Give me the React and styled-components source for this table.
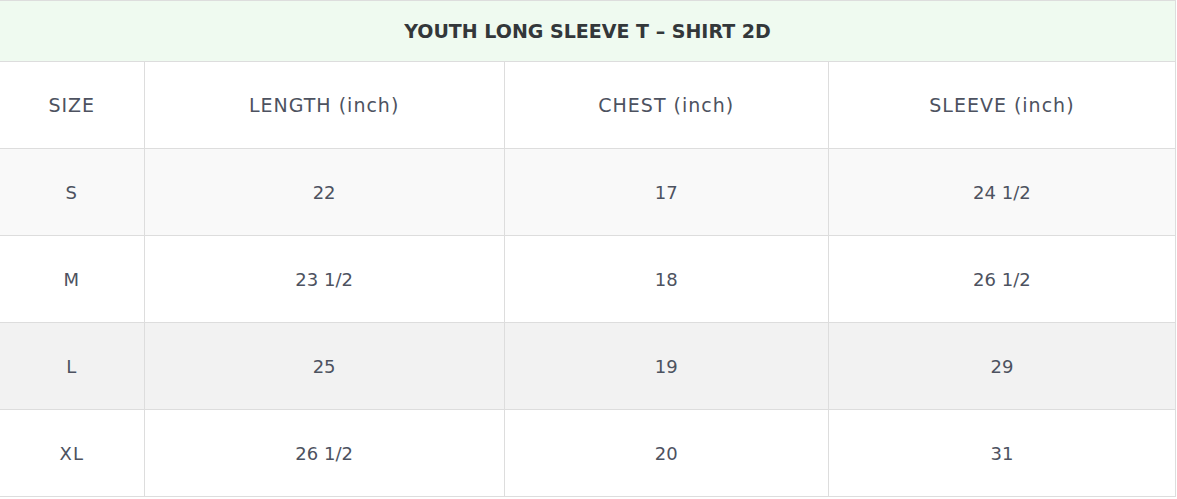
import React from 'react';
import styled, { createGlobalStyle } from 'styled-components';

const GlobalStyle = createGlobalStyle`
  html, body {
    margin: 0;
    padding: 0;
    background: #ffffff;
  }
  body {
    font-family: "DejaVu Sans", "Noto Sans", sans-serif;
  }
`;

const Table = styled.table`
  width: 1176px;
  border-collapse: collapse;
  table-layout: fixed;
  border-top: 1px solid #dddddd;
  border-right: 1px solid #dddddd;
  border-bottom: 1px solid #dddddd;
`;

const TitleCell = styled.th`
  height: 60px;
  padding: 0;
  background: #effaf0;
  color: #33373a;
  font-size: 19px;
  font-weight: 600;
  text-align: center;
  border-bottom: 1px solid #dddddd;
`;

const Row = styled.tr`
  background: ${(p) => p.$bg || '#ffffff'};
`;

const Cell = styled.td`
  height: 86px;
  padding: 0;
  text-align: center;
  vertical-align: middle;
  color: #4d5260;
  font-size: ${(p) => (p.$head ? '19px' : '18px')};
  letter-spacing: ${(p) => (p.$head || p.$first ? '1px' : '0')};
  font-weight: 400;
  border-top: 1px solid #dddddd;
  border-left: ${(p) => (p.$first ? 'none' : '1px solid #dddddd')};
`;

const columns = [
  { label: 'SIZE', width: 144 },
  { label: 'LENGTH (inch)', width: 360 },
  { label: 'CHEST (inch)', width: 324 },
  { label: 'SLEEVE (inch)', width: 347 },
];

const rows = [
  { values: ['S', '22', '17', '24 1/2'], bg: '#f9f9f9' },
  { values: ['M', '23 1/2', '18', '26 1/2'], bg: '#ffffff' },
  { values: ['L', '25', '19', '29'], bg: '#f2f2f2' },
  { values: ['XL', '26 1/2', '20', '31'], bg: '#ffffff' },
];

export default function App() {
  return (
    <>
      <GlobalStyle />
      <Table>
        <colgroup>
          {columns.map((c) => (
            <col key={c.label} style={{ width: c.width }} />
          ))}
        </colgroup>
        <thead>
          <tr>
            <TitleCell colSpan={4}>YOUTH LONG SLEEVE T – SHIRT 2D</TitleCell>
          </tr>
        </thead>
        <tbody>
          <Row>
            {columns.map((c, i) => (
              <Cell key={c.label} $head $first={i === 0}>
                {c.label}
              </Cell>
            ))}
          </Row>
          {rows.map((r) => (
            <Row key={r.values[0]} $bg={r.bg}>
              {r.values.map((v, i) => (
                <Cell key={i} $first={i === 0}>
                  {v}
                </Cell>
              ))}
            </Row>
          ))}
        </tbody>
      </Table>
    </>
  );
}
